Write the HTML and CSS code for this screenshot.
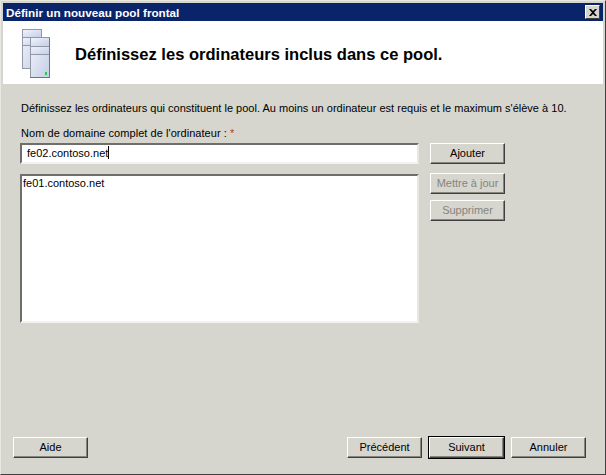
FILE: index.html
```html
<!DOCTYPE html>
<html lang="fr">
<head>
  <meta charset="UTF-8" />
  <title>Définir un nouveau pool frontal</title>
  <link rel="stylesheet" href="styles.css">
</head>
<body>
  <div class="fenetre">
    <div class="titre">
      <span>Définir un nouveau pool frontal</span>
      <button class="fermer" aria-label="Fermer">
        <svg width="8" height="7" viewBox="0 0 8 7"><path d="M0 0h2l2 2 2-2h2L5 3.5 8 7H6L4 5 2 7H0l3-3.5z" fill="#000"/></svg>
      </button>
    </div>

    <header class="entete">
      <svg class="icone" width="30" height="50" viewBox="0 0 30 50">
        <defs>
          <linearGradient id="boitier" x1="0" y1="0" x2="1" y2="1">
            <stop offset="0" stop-color="#f2f5fc"/>
            <stop offset="1" stop-color="#c3cde6"/>
          </linearGradient>
        </defs>
        <g stroke="#9398a6" fill="url(#boitier)">
          <rect x="0.5" y="0.5" width="19" height="39"/>
          <rect x="0.5" y="0.5" width="19" height="8"/>
          <rect x="0.5" y="8.5" width="19" height="8"/>
          <rect x="8.5" y="8.5" width="19" height="40"/>
          <rect x="8.5" y="8.5" width="19" height="9"/>
          <rect x="8.5" y="17.5" width="19" height="8"/>
        </g>
        <path d="M27.5 9v40M8 48.5h20" stroke="#6f7482" fill="none"/>
        <rect x="23" y="43" width="2" height="3" fill="#22d050"/>
      </svg>
      <h1>Définissez les ordinateurs inclus dans ce pool.</h1>
    </header>

    <main class="contenu">
      <p class="intro">Définissez les ordinateurs qui constituent le pool. Au moins un ordinateur est requis et le maximum s'élève à 10.</p>
      <label class="libelle" for="fqdn">Nom de domaine complet de l'ordinateur : <span class="requis">*</span></label>
      <div class="grille">
        <div class="champs">
          <div class="saisie" id="fqdn">fe02.contoso.net<span class="curseur"></span></div>
          <div class="liste">fe01.contoso.net</div>
        </div>
        <div class="actions">
          <button class="btn">Ajouter</button>
          <button class="btn off mettre">Mettre à jour</button>
          <button class="btn off">Supprimer</button>
        </div>
      </div>
    </main>

    <footer class="pied">
      <button class="btn">Aide</button>
      <div class="nav">
        <button class="btn">Précédent</button>
        <button class="btn defaut">Suivant</button>
        <button class="btn">Annuler</button>
      </div>
    </footer>
  </div>
</body>
</html>
```

FILE: styles.css
```css
* {
  margin: 0;
  padding: 0;
  box-sizing: border-box;
}
html, body {
  width: 606px;
  height: 475px;
  overflow: hidden;
}
body {
  font-family: "Liberation Sans", Arial, sans-serif;
  font-size: 11px;
  color: #000;
  background: #d6d5ce;
}
.fenetre {
  width: 606px;
  height: 475px;
  display: flex;
  flex-direction: column;
  background: #d6d5ce;
  border-top: 1px solid #e8e8e3;
  border-left: 1px solid #e8e8e3;
  border-right: 1px solid #404040;
  border-bottom: 1px solid #404040;
  padding: 2px 2px 1px 2px;
}
.titre {
  height: 18px;
  flex: none;
  background: #0a246a;
  color: #fff;
  font-weight: bold;
  font-size: 11.7px;
  display: flex;
  align-items: center;
  justify-content: space-between;
  padding: 0 3px 0 3px;
}
.fermer {
  width: 15px;
  height: 14px;
  display: flex;
  align-items: center;
  justify-content: center;
  background: #d6d5ce;
  border: 1px solid;
  border-color: #fff #404040 #404040 #fff;
}
.entete {
  height: 63px;
  flex: none;
  background: #fff;
  display: flex;
  align-items: center;
  padding-left: 19px;
}
.icone {
  flex: none;
  margin-top: 2px;
}
.entete h1 {
  margin: 5px 0 0 23px;
  font-size: 16.55px;
  font-weight: bold;
}
.contenu {
  flex: 1;
  padding: 17px 0 0 17px;
}
.intro {
  line-height: 14px;
  white-space: nowrap;
  margin-left: 1px;
  letter-spacing: 0.01px;
}
.libelle {
  display: block;
  margin: 11px 0 0 1px;
  line-height: 14px;
  letter-spacing: 0.05px;
}
.requis {
  color: #c0392b;
}
.grille {
  display: flex;
  gap: 11px;
  margin-top: 3px;
}
.champs {
  width: 399px;
  display: flex;
  flex-direction: column;
  gap: 10px;
}
.saisie, .liste {
  background: #fff;
  border: 2px solid;
  border-color: #6e6e6a #e8e8e3 #f2f2ee #6e6e6a;
}
.saisie {
  height: 21px;
  padding-left: 5px;
  line-height: 17px;
}
.curseur {
  display: inline-block;
  width: 1px;
  height: 13px;
  vertical-align: -2px;
  background: #000;
}
.liste {
  height: 149px;
  padding: 0 1px;
  line-height: 14px;
}
.actions {
  width: 75px;
  display: flex;
  flex-direction: column;
  gap: 6px;
}
.btn {
  width: 75px;
  height: 21px;
  font: inherit;
  color: #000;
  padding-bottom: 1px;
  background: #d6d5ce;
  border: 1px solid;
  border-color: #fff #404040 #404040 #fff;
  box-shadow: inset -1px -1px 0 #85857f;
}
.btn.off {
  color: #85857f;
}
.btn.mettre {
  margin-top: 3px;
}
.btn.defaut {
  outline: 1px solid #000;
}
.pied {
  flex: none;
  display: flex;
  justify-content: space-between;
  padding: 0 17px 15px 10px;
}
.nav {
  display: flex;
  gap: 7px;
}
```
